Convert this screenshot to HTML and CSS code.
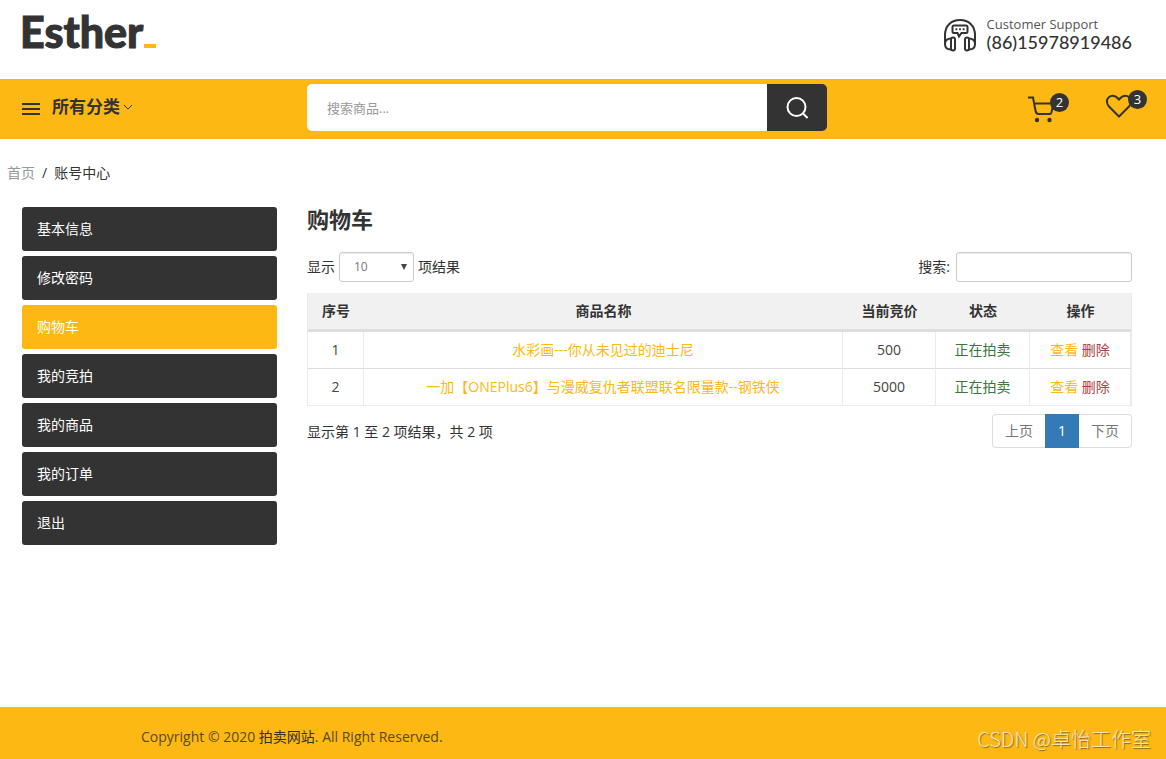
FILE: index.html
```html
<!DOCTYPE html>
<html lang="zh-CN">
<head>
<meta charset="utf-8">
<meta name="viewport" content="width=device-width, initial-scale=1">
<title>购物车</title>
<link rel="stylesheet" href="styles.css">
</head>
<body>
<header class="header">
  <a class="logo" href="#">Esther<span class="logo-mark"></span></a>
  <div class="support">
    <svg class="support-icon" viewBox="0 0 34 34" aria-hidden="true">
      <path d="M2 27V17C2 7.500 8.500 2 17 2S32 7.500 32 17V27"/>
      <path d="M11 7.500h12q1.500 0 1.500 1.500v4.500q0 1.500-1.500 1.500h-4.500l-2.500 3.500-1.500-3.500H11q-1.500 0-1.500-1.500V9q0-1.500 1.500-1.500z"/>
      <path d="M12.500 11.300h1.800M16.100 11.300h1.800M19.700 11.300h1.800"/>
      <path d="M8 20.500c-3.500 0-6 2-6 5.500s2.500 5.500 6 5.500M26 20.500c3.500 0 6 2 6 5.500s-2.500 5.500-6 5.500"/>
      <rect x="8" y="19.500" width="4" height="13" rx="2"/>
      <rect x="22" y="19.500" width="4" height="13" rx="2"/>
    </svg>
    <div>
      <div class="support-label">Customer Support</div>
      <div class="support-phone">(86)15978919486</div>
    </div>
  </div>
</header>

<div class="navbar">
  <button class="categories" type="button">
    <span class="burger"></span>
    <span class="categories-text">所有分类
      <svg class="chevron" viewBox="0 0 10 6" aria-hidden="true"><path d="M1 1l4 4 4-4"/></svg>
    </span>
  </button>
  <form class="search">
    <input class="search-input" type="text" placeholder="搜索商品..." aria-label="搜索商品">
    <button class="search-button" type="button" aria-label="搜索">
      <svg viewBox="0 0 22 22" aria-hidden="true"><circle cx="10.500" cy="10" r="9"/><path d="M16.500 16l5 5"/></svg>
    </button>
  </form>
  <div class="actions">
    <a class="action cart" href="#" aria-label="购物车">
      <svg viewBox="0 0 28 28" aria-hidden="true">
        <path d="M1 1.500h5l2.500 13q.5 3.500 3 3.500h11q1.500 0 1.900-1.500L26.500 7.500H7.200"/>
        <circle class="wheel" cx="10" cy="24" r="2.200"/><circle class="wheel" cx="22.500" cy="24" r="2.200"/>
      </svg>
      <span class="badge">2</span>
    </a>
    <a class="action heart" href="#" aria-label="收藏">
      <svg viewBox="0 0 28 28" aria-hidden="true">
        <path d="M14 24.500L4 14.500C1.200 11.500 1.200 7.500 3.800 5.300 6.800 2.900 10.500 3.500 14 7.500 17.500 3.500 21.200 2.900 24.200 5.300c2.600 2.200 2.600 6.200-.2 9.200z"/>
      </svg>
      <span class="badge">3</span>
    </a>
  </div>
</div>

<nav class="breadcrumb" aria-label="位置">
  <a href="#">首页</a><span>/</span><span>账号中心</span>
</nav>

<main class="content">
  <nav class="menu">
    <a class="menu-item" href="#">基本信息</a>
    <a class="menu-item" href="#">修改密码</a>
    <a class="menu-item active" href="#">购物车</a>
    <a class="menu-item" href="#">我的竞拍</a>
    <a class="menu-item" href="#">我的商品</a>
    <a class="menu-item" href="#">我的订单</a>
    <a class="menu-item" href="#">退出</a>
  </nav>
  <section class="panel">
    <h1 class="title">购物车</h1>
    <div class="toolbar">
      <div class="length">
        <label for="length">显示</label>
        <span class="select-wrap">
          <select class="field length-select" id="length"><option>10</option><option>25</option><option>50</option></select>
          <svg class="select-arrow" viewBox="0 0 6 6" aria-hidden="true"><path d="M0 0h6L3 6z"/></svg>
        </span>
        <span>项结果</span>
      </div>
      <div class="filter">
        <label for="filter">搜索:</label>
        <input class="field filter-input" id="filter" type="search">
      </div>
    </div>
    <table class="table">
      <colgroup><col class="col-no"><col><col class="col-price"><col class="col-state"><col class="col-ops"></colgroup>
      <thead>
        <tr><th>序号</th><th>商品名称</th><th>当前竞价</th><th>状态</th><th>操作</th></tr>
      </thead>
      <tbody>
        <tr>
          <td>1</td><td><a href="#">水彩画---你从未见过的迪士尼</a></td><td>500</td>
          <td class="live">正在拍卖</td><td><a href="#">查看</a> <a class="remove" href="#">删除</a></td>
        </tr>
        <tr>
          <td>2</td><td><a href="#">一加【ONEPlus6】与漫威复仇者联盟联名限量款--钢铁侠</a></td><td>5000</td>
          <td class="live">正在拍卖</td><td><a href="#">查看</a> <a class="remove" href="#">删除</a></td>
        </tr>
      </tbody>
    </table>
    <div class="table-foot">
      <div class="info">显示第 1 至 2 项结果，共 2 项</div>
      <nav class="pager" aria-label="分页">
        <a href="#">上页</a><a class="current" href="#">1</a><a href="#">下页</a>
      </nav>
    </div>
  </section>
</main>

<footer class="footer">
  <div class="copyright">Copyright © 2020 <a href="#">拍卖网站</a>. All Right Reserved.</div>
  <div class="watermark">CSDN @卓怡工作室</div>
</footer>
</body>
</html>
```
FILE: styles.css
```css
* { box-sizing: border-box; }

body {
  margin: 0;
  min-height: 100vh;
  display: flex;
  flex-direction: column;
  background: #fff;
  color: #333;
  font: 14px/20px "Open Sans", "Noto Sans CJK SC", sans-serif;
}

a { color: inherit; text-decoration: none; }
button, input, select { font: inherit; color: inherit; }

.header {
  display: flex;
  justify-content: space-between;
  align-items: flex-start;
  height: 79px;
  padding: 12px 34px 0 20px;
}
.logo {
  display: flex;
  align-items: baseline;
  gap: 1px;
  font: 900 43px/40px Lato, sans-serif;
  -webkit-text-stroke: 1px #333;
}
.logo-mark { width: 12px; height: 4px; background: #fdb813; }

.support { display: flex; gap: 10px; padding-top: 4px; }
.support-icon {
  width: 34px;
  height: 34px;
  margin-top: 2px;
  fill: none;
  stroke: #333;
  stroke-width: 2;
}
.support-label { font-size: 13px; line-height: 16px; color: #555; }
.support-phone { font: 500 18px/20px Lato, sans-serif; }

.navbar {
  display: flex;
  align-items: flex-start;
  height: 60px;
  padding: 5px 19px 0 22px;
  background: #fdb813;
}
.categories {
  display: flex;
  align-items: center;
  width: 285px;
  height: 48px;
  padding: 0;
  border: 0;
  background: none;
  font-size: 17px;
  font-weight: 700;
  line-height: 24px;
  text-align: left;
}
.burger {
  width: 18px;
  height: 12px;
  margin-top: 2px;
  margin-right: 12px;
  border-top: 2px solid #333;
  border-bottom: 2px solid #333;
  background: linear-gradient(#333, #333) center / 100% 2px no-repeat;
}
.categories-text { display: flex; align-items: center; gap: 3px; padding-bottom: 2px; }
.chevron { width: 10px; height: 6px; fill: none; stroke: #333; }
.search { display: flex; flex: 0 1 520px; height: 47px; min-width: 0; }
.search-input {
  flex: 1;
  min-width: 0;
  padding: 0 20px;
  border: 0;
  border-radius: 5px 0 0 5px;
  background: #fff;
  font-size: 13px;
}
.search-input::placeholder { color: #999; opacity: 1; }
.search-button {
  display: grid;
  place-items: center;
  width: 60px;
  padding: 0;
  border: 0;
  border-radius: 0 5px 5px 0;
  background: #333;
}
.search-button svg { width: 22px; height: 22px; fill: none; stroke: #fff; stroke-width: 2; }
.actions { display: flex; gap: 36px; margin-left: auto; padding-top: 6px; }
.action { position: relative; width: 42px; height: 34px; }
.action svg { display: block; width: 28px; height: 28px; fill: none; stroke: #333; stroke-width: 2; }
.cart { padding-top: 6px; }
.heart { padding-top: 2px; }
.cart .badge { top: 3px; }
.cart .wheel { fill: #333; stroke: none; }
.badge {
  position: absolute;
  top: 0;
  right: 0;
  width: 19px;
  height: 19px;
  border-radius: 50%;
  background: #333;
  color: #fff;
  font-size: 13px;
  line-height: 19px;
  text-align: center;
}

.breadcrumb { display: flex; gap: 7px; padding: 24px 7px; }
.breadcrumb a { color: #999; }

.content { display: flex; gap: 30px; padding: 0 34px 40px 22px; }
.menu { display: flex; flex-direction: column; gap: 5px; flex: 0 0 255px; }
.menu-item {
  padding: 12px 15px;
  border-radius: 3px;
  background: #333;
  color: #fff;
}
.menu-item.active { background: #fdb813; }

.panel { flex: 1; min-width: 0; }
.title { margin: 0; font-size: 22px; line-height: 24px; font-weight: 700; }
.toolbar {
  display: flex;
  justify-content: space-between;
  margin: 21px 0 11px;
}
.length { display: flex; align-items: center; gap: 4px; }
.filter { display: flex; align-items: center; gap: 6px; }
.field {
  height: 30px;
  border: 1px solid #ccc;
  border-radius: 3px;
  background: #fff;
  box-shadow: inset 0 1px 1px rgba(0, 0, 0, .08);
  color: #777;
  font-size: 12px;
}
.select-wrap { position: relative; display: flex; }
.length-select { appearance: none; width: 75px; padding: 0 14px; }
.select-arrow {
  position: absolute;
  top: 12px;
  right: 7px;
  width: 6px;
  height: 6px;
  fill: #444;
  pointer-events: none;
}
.filter-input { width: 176px; padding: 0 10px; }

.table {
  width: 100%;
  table-layout: fixed;
  border: solid #ebebeb;
  border-width: 0 1px;
  border-collapse: separate;
  border-spacing: 0;
  text-align: center;
}
.col-no { width: 56px; }
.col-price { width: 93px; }
.col-state { width: 94px; }
.col-ops { width: 101px; }
.table th {
  padding: 8px 0;
  border-bottom: 3px solid #ddd;
  background: #f1f1f1;
  font-weight: 700;
}
.table td {
  padding: 8px 0;
  border-right: 1px solid #ebebeb;
  border-bottom: 1px solid #ddd;
  color: #444;
}
.table tbody tr:last-child td { border-bottom-color: #ebebeb; }
.table td a { color: #fdb813; }
.table td.live { color: #3c763d; }
.table td .remove { color: #a94442; }

.table-foot {
  display: flex;
  justify-content: space-between;
  align-items: flex-start;
  margin-top: 8px;
}
.info { padding-top: 8px; }
.pager { display: flex; }
.pager a {
  padding: 6px 12px;
  border: 1px solid #ddd;
  color: #777;
}
.pager a:first-child { border-right: 0; border-radius: 4px 0 0 4px; }
.pager a:last-child { border-left: 0; border-radius: 0 4px 4px 0; }
.pager .current { border-color: #337ab7; background: #337ab7; color: #fff; }

.footer {
  display: flex;
  justify-content: space-between;
  align-items: flex-start;
  margin-top: auto;
  height: 52px;
  padding: 20px 15px 0 141px;
  background: #fdb813;
}
.copyright { color: #5b4a20; }
.copyright a { color: #333; }
.watermark {
  color: #f3e3b8;
  font: 300 20px/24px "Noto Sans CJK SC", sans-serif;
  text-shadow: 1px 1px 1px #8a6a20;
}
```
